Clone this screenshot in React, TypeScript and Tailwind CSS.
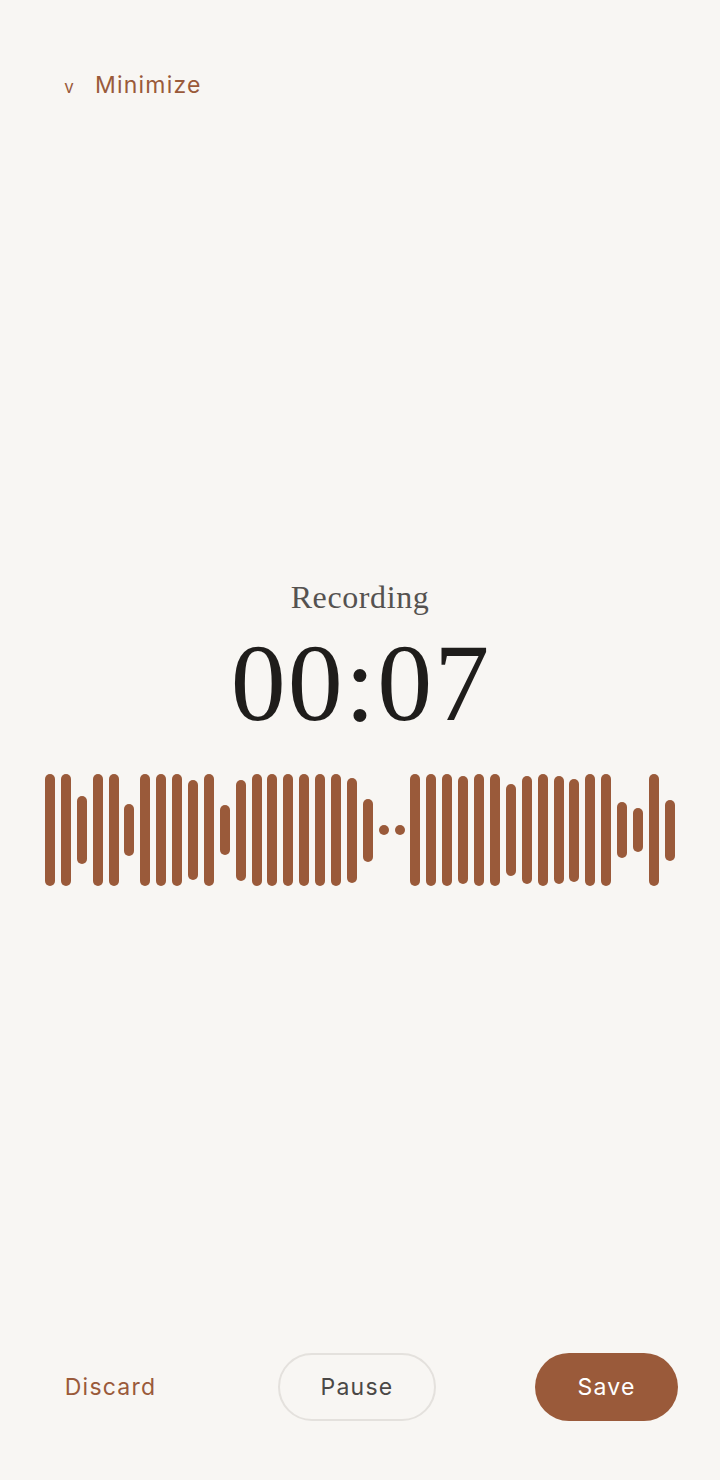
import React from "react";

const bars: number[] = [
  112, 112, 68, 112, 112, 52, 112, 112, 112, 100,
  112, 50, 101, 112, 112, 112, 112, 112, 112, 105,
  63, 10, 10, 112, 112, 112, 108, 112, 112, 92,
  108, 112, 108, 103, 112, 112, 56, 44, 112, 61,
];

export default function App() {
  return (
    <div
      className="w-[720px] h-[1480px] bg-[#f8f6f3] flex flex-col"
      style={{ fontFamily: "Inter, 'Open Sans', sans-serif" }}
    >
      <div className="pt-[70px] px-[64px]">
        <div className="flex items-center h-[30px] gap-[21px] text-[#9a5a3a]">
          <span className="text-[17px] leading-none w-[10px] text-center mt-[5px]">v</span>
          <span className="text-[23px] leading-none tracking-[1.2px]">Minimize</span>
        </div>
      </div>

      <div className="flex flex-col items-center mt-[477px]">
        <div
          className="text-[32px] leading-[40px] tracking-[0.6px] text-[#555250]"
          style={{ fontFamily: "'Liberation Serif', 'DejaVu Serif', serif" }}
        >
          Recording
        </div>
        <div
          className="text-[110px] leading-[110px] h-[110px] mt-[11px] tracking-[2px] pl-[2px] text-[#1f1d1b]"
          style={{ fontFamily: "'Liberation Serif', 'DejaVu Serif', serif" }}
        >
          00:07
        </div>
      </div>

      <div className="mt-[36px] px-[45px]">
        <div className="h-[112px] flex items-center justify-between">
          {bars.map((h, i) => (
            <div
              key={i}
              className="w-[10px] rounded-full bg-[#9a5a3a]"
              style={{ height: `${h}px` }}
            />
          ))}
        </div>
      </div>

      <div className="flex-1" />

      <div className="px-[42px] pb-[59px] flex items-center justify-between">
        <button className="w-[137px] h-[68px] flex items-center justify-center text-[23px] tracking-[1.2px] text-[#9a5a3a]">
          Discard
        </button>
        <button className="w-[158px] h-[68px] rounded-full border-2 border-[#e4e1dd] flex items-center justify-center text-[23px] tracking-[1.2px] text-[#4a4846]">
          Pause
        </button>
        <button className="w-[143px] h-[68px] rounded-full bg-[#9a5a3a] flex items-center justify-center text-[23px] tracking-[1.2px] text-white">
          Save
        </button>
      </div>
    </div>
  );
}
